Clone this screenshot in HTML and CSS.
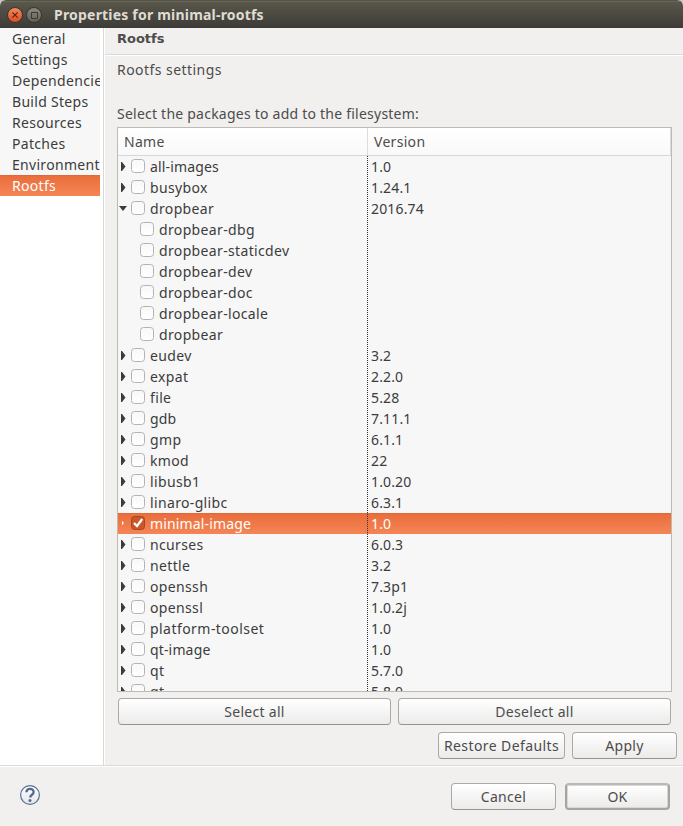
FILE: index.html
```html
<!DOCTYPE html>
<html lang="en">
<head>
<meta charset="utf-8">
<title>Properties for minimal-rootfs</title>
<link rel="stylesheet" href="styles.css">
</head>
<body>
<div class="window">
  <header class="titlebar">
    <svg class="winbtn" width="16" height="16" viewBox="0 0 16 16"><defs><linearGradient id="o" x1="0" y1="0" x2="0" y2="1"><stop offset="0" stop-color="#f58a63"/><stop offset="1" stop-color="#dc4c1b"/></linearGradient><linearGradient id="g" x1="0" y1="0" x2="0" y2="1"><stop offset="0" stop-color="#8b897f"/><stop offset="1" stop-color="#625f57"/></linearGradient></defs><circle cx="8" cy="8" r="7.5" fill="url(#o)" stroke="#35342f"/><path d="M5.3 5.3l5.4 5.4M10.7 5.3l-5.4 5.4" stroke="#58281a" stroke-width="1.2"/></svg>
    <svg class="winbtn" width="16" height="16" viewBox="0 0 16 16"><circle cx="8" cy="8" r="7.5" fill="url(#g)" stroke="#35342f"/><path d="M5.5 5.5h6v6h-6z" fill="none" stroke="#3a3933"/></svg>
    <span class="title">Properties for minimal-rootfs</span>
  </header>
  <div class="main">
    <nav class="sidebar">
      <div>General</div><div>Settings</div><div class="dep">Dependencies</div><div>Build Steps</div><div>Resources</div><div>Patches</div><div>Environment</div><div class="active">Rootfs</div>
    </nav>
    <section class="page">
      <h1>Rootfs</h1>
      <div class="content">
        <p class="sub">Rootfs settings</p>
        <p class="prompt">Select the packages to add to the filesystem:</p>
        <div class="table">
          <div class="thead"><span class="name">Name</span><span class="ver">Version</span></div>
          <div class="tbody">
            <div class="row snug"><div class="name"><i class="arrow"></i><i class="box"></i><span>all-images</span></div><div class="ver">1.0</div></div>
            <div class="row"><div class="name"><i class="arrow"></i><i class="box"></i><span>busybox</span></div><div class="ver">1.24.1</div></div>
            <div class="row"><div class="name"><i class="arrow open"></i><i class="box"></i><span>dropbear</span></div><div class="ver">2016.74</div></div>
            <div class="row child"><div class="name"><i class="box"></i><span>dropbear-dbg</span></div><div class="ver"></div></div>
            <div class="row child"><div class="name"><i class="box"></i><span>dropbear-staticdev</span></div><div class="ver"></div></div>
            <div class="row child"><div class="name"><i class="box"></i><span>dropbear-dev</span></div><div class="ver"></div></div>
            <div class="row child"><div class="name"><i class="box"></i><span>dropbear-doc</span></div><div class="ver"></div></div>
            <div class="row child"><div class="name"><i class="box"></i><span>dropbear-locale</span></div><div class="ver"></div></div>
            <div class="row child"><div class="name"><i class="box"></i><span>dropbear</span></div><div class="ver"></div></div>
            <div class="row"><div class="name"><i class="arrow"></i><i class="box"></i><span>eudev</span></div><div class="ver">3.2</div></div>
            <div class="row"><div class="name"><i class="arrow"></i><i class="box"></i><span>expat</span></div><div class="ver">2.2.0</div></div>
            <div class="row"><div class="name"><i class="arrow"></i><i class="box"></i><span>file</span></div><div class="ver">5.28</div></div>
            <div class="row snug"><div class="name"><i class="arrow"></i><i class="box"></i><span>gdb</span></div><div class="ver">7.11.1</div></div>
            <div class="row"><div class="name"><i class="arrow"></i><i class="box"></i><span>gmp</span></div><div class="ver">6.1.1</div></div>
            <div class="row"><div class="name"><i class="arrow"></i><i class="box"></i><span>kmod</span></div><div class="ver">22</div></div>
            <div class="row"><div class="name"><i class="arrow"></i><i class="box"></i><span>libusb1</span></div><div class="ver">1.0.20</div></div>
            <div class="row"><div class="name"><i class="arrow"></i><i class="box"></i><span>linaro-glibc</span></div><div class="ver">6.3.1</div></div>
            <div class="row selected snug"><div class="name"><i class="arrow"></i><i class="box"><svg width="12" height="12" viewBox="0 0 12 12"><path d="M2 6l3 3 5.2-7" fill="none" stroke="#fff" stroke-width="2.2"/></svg></i><span>minimal-image</span></div><div class="ver">1.0</div></div>
            <div class="row"><div class="name"><i class="arrow"></i><i class="box"></i><span>ncurses</span></div><div class="ver">6.0.3</div></div>
            <div class="row"><div class="name"><i class="arrow"></i><i class="box"></i><span>nettle</span></div><div class="ver">3.2</div></div>
            <div class="row"><div class="name"><i class="arrow"></i><i class="box"></i><span>openssh</span></div><div class="ver">7.3p1</div></div>
            <div class="row"><div class="name"><i class="arrow"></i><i class="box"></i><span>openssl</span></div><div class="ver">1.0.2j</div></div>
            <div class="row loose"><div class="name"><i class="arrow"></i><i class="box"></i><span>platform-toolset</span></div><div class="ver">1.0</div></div>
            <div class="row snug"><div class="name"><i class="arrow"></i><i class="box"></i><span>qt-image</span></div><div class="ver">1.0</div></div>
            <div class="row"><div class="name"><i class="arrow"></i><i class="box"></i><span>qt</span></div><div class="ver">5.7.0</div></div>
            <div class="row"><div class="name"><i class="arrow"></i><i class="box"></i><span>qt</span></div><div class="ver">5.8.0</div></div>
          </div>
        </div>
        <div class="buttons wide"><button>Select all</button><button>Deselect all</button></div>
        <div class="buttons page-actions"><button class="restore">Restore Defaults</button><button>Apply</button></div>
      </div>
    </section>
  </div>
  <footer>
    <svg class="help" width="22" height="22" viewBox="0 0 22 22"><defs><linearGradient id="h" x1="0" y1="0" x2="0" y2="1"><stop offset="0" stop-color="#fff"/><stop offset="1" stop-color="#e3e5e9"/></linearGradient></defs><circle cx="11" cy="11" r="9.4" fill="url(#h)" stroke="#596f91" stroke-width="1.2"/><path d="M7.4 8.2C7.6 3.6 14.7 3.8 14.6 8c0 2.8-3.4 2.7-3.4 5.6" fill="none" stroke="#526a8e" stroke-width="2.3"/><circle cx="11" cy="16.5" r="1.5" fill="#526a8e"/></svg>
    <div class="buttons"><button>Cancel</button><button class="default">OK</button></div>
  </footer>
</div>
</body>
</html>
```
FILE: styles.css
```css
* { box-sizing: border-box; }
body { margin: 0; background: #c9c8c5; font: 14px/21px "Noto Sans", "Open Sans", sans-serif; color: #3c3c3c; }
.window { width: 683px; height: 826px; display: flex; flex-direction: column; background: #f1f0ee; border-radius: 6px 6px 0 0; overflow: hidden; }
.titlebar { height: 28px; flex: none; display: flex; align-items: center; padding-left: 7px; background: linear-gradient(#5b584b, #3c3b37); border-top: 1px solid #555348; box-shadow: inset 0 1px #69665a; }
.winbtn { margin-right: 3px; }
.title { margin-left: 9px; font-weight: 700; font-size: 14px; letter-spacing: .2px; color: #dfdbd2; white-space: nowrap; }
.main { height: 737px; flex: none; display: flex; }
.sidebar { width: 104px; flex: none; background: #fff; border-right: 1px solid #d9d8d6; padding-right: 3px; letter-spacing: .3px; }
.sidebar div { height: 21px; padding-left: 12px; background: #f7f7f7; overflow: hidden; white-space: nowrap; }
.sidebar .dep { letter-spacing: .35px; }
.sidebar .active, .selected { background: linear-gradient(#e96d3b, #f58555); box-shadow: inset 0 1px #de6939; color: #fff; }
.page { flex: 1; border-left: 1px solid #fff; min-width: 0; }
h1 { margin: 0; height: 27px; padding-left: 12px; border-bottom: 1px solid #dad9d7; font: bold 13px/21px "DejaVu Sans", sans-serif; color: #4c4c4c; }
.content { border-top: 1px solid #fff; padding: 3px 6px 0 12px; color: #4c4c4c; }
p { margin: 0; }
.sub { letter-spacing: .45px; }
.prompt { margin-top: 23px; letter-spacing: .23px; }
.table { width: 555px; height: 565px; margin-top: 3px; border: 1px solid #bcbbb5; overflow: hidden; background: #f7f7f7; }
.thead { height: 28px; display: flex; line-height: 28px; background: linear-gradient(#fff, #f9f9f9); border-bottom: 1px solid #d7d7d5; border-right: 1px solid #dcdcda; letter-spacing: .3px; }
.thead .name { width: 250px; padding-left: 6px; border-right: 1px solid #dcdcda; }
.thead .ver { padding-left: 6px; }
.tbody { color: #3c3c3c; }
.row { height: 21px; display: flex; }
.row .name { width: 249px; height: 21px; display: flex; padding-left: 3px; }
.row .ver { height: 21px; padding-left: 4px; line-height: 22px; letter-spacing: .15px; background: repeating-linear-gradient(#333 0 1px, transparent 1px 2px) left / 1px 100% no-repeat; }
.row:nth-child(even) .ver { background-image: repeating-linear-gradient(transparent 0 1px, #333 1px 2px); }
.row span { margin-left: 5px; line-height: 22px; letter-spacing: .35px; }
.row.snug span { letter-spacing: .15px; }
.row.loose span { letter-spacing: .45px; }
.arrow { width: 5px; height: 9px; margin: 6px 5px 0 0; background: #3c3c3c; clip-path: polygon(0 0, 20% 0, 90% 50%, 20% 100%, 0 100%); }
.arrow.open { width: 8px; height: 5px; margin: 8px 4px 0 -2px; clip-path: polygon(0 0, 100% 0, 50% 100%); }
.box { width: 14px; height: 14px; margin-top: 3px; border: 1px solid #b3b3b3; border-radius: 3.5px; background: linear-gradient(#f8f8f8, #fff); }
.child .name { padding-left: 22px; }
.selected .arrow { background: #fff; width: 2px; height: 4px; margin: 8px 7px 0 1px; }
.selected .box { background: #c9572c; border-color: #a9451f; }
.box svg { display: block; }
.buttons { display: flex; gap: 7px; }
button { width: 105px; height: 27px; padding: 0; border: 1px solid #aaa9a6; border-bottom-color: #94938f; border-radius: 4px; background: linear-gradient(#fff, #ecebea); box-shadow: inset 0 1px #fff; font: inherit; letter-spacing: .3px; color: #4c4c4c; }
.wide { margin: 6px 0 0 1px; }
.wide button { width: 273px; }
.page-actions { margin-top: 7px; justify-content: flex-end; }
.page-actions .restore { width: 127px; letter-spacing: .4px; }
footer { flex: 1; display: flex; justify-content: space-between; border-top: 1px solid #dad9d7; box-shadow: inset 0 1px #fff; padding: 17px 13px 0 19px; }
.help { margin-top: 1px; }
footer .buttons { gap: 9px; }
.default { border: 2px solid #a5a4a1; border-top-color: #bab9b6; box-shadow: inset 0 0 0 1px #d8d8d6; }
```
